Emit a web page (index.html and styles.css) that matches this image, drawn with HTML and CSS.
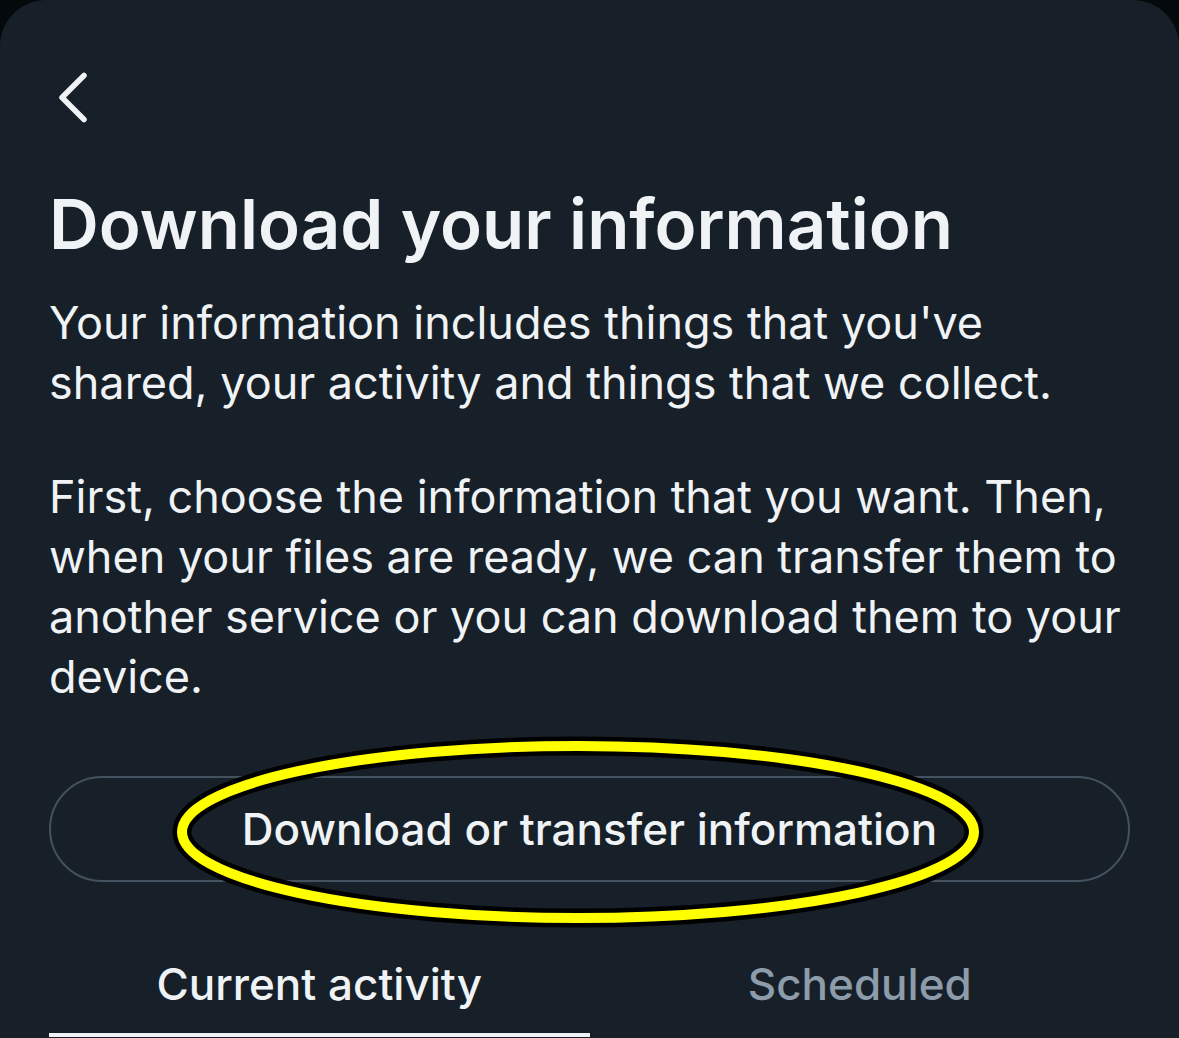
FILE: index.html
```html
<!DOCTYPE html>
<html lang="en">
<head>
  <meta charset="UTF-8" />
  <meta name="viewport" content="width=device-width, initial-scale=1.0"/>
  <title>Download your information</title>
  <link rel="stylesheet" href="styles.css">
</head>
<body>
  <div class="sheet">
    <button class="back-btn" aria-label="Back">
      <svg width="40" height="54" viewBox="0 0 40 54">
        <path d="M30 4.5 L8 26.5 L30 48.5" fill="none" stroke="#f0f3f6" stroke-width="5.5" stroke-linecap="round" stroke-linejoin="round"/>
      </svg>
    </button>

    <h1 class="title">Download your information</h1>
    <p class="text">Your information includes things that you've shared, your activity and things that we collect.</p>
    <p class="text">First, choose the information that you want. Then, when your files are ready, we can transfer them to another service or you can download them to your device.</p>

    <div class="action">
      <button class="outline-btn">Download or transfer information</button>
      <svg class="highlight" width="820" height="196" viewBox="0 0 820 196">
        <ellipse cx="410" cy="98" rx="396" ry="86" fill="none" stroke="#000" stroke-width="19"/>
        <ellipse cx="410" cy="98" rx="396" ry="86" fill="none" stroke="#ffff00" stroke-width="10"/>
      </svg>
    </div>

    <div class="tabs">
      <div class="tab active">Current activity</div>
      <div class="tab">Scheduled</div>
    </div>
  </div>
</body>
</html>
```

FILE: styles.css
```css
* {
  box-sizing: border-box;
}

body {
  margin: 0;
  background: #04090c;
  font-family: Inter, "Noto Sans", sans-serif;
  color: #f0f3f6;
  height: 1038px;
  overflow: hidden;
}

.sheet {
  background: #172028;
  border-radius: 46px 46px 0 0;
  height: 1038px;
  padding: 0 49px;
  display: flex;
  flex-direction: column;
}

.back-btn {
  background: none;
  border: none;
  padding: 0;
  margin: 71px 0 0 5px;
  width: 40px;
  height: 54px;
  cursor: pointer;
  align-self: flex-start;
}

.back-btn svg {
  display: block;
}

.title {
  font-size: 69px;
  font-weight: 600;
  margin: 57px 0 0;
  line-height: 84px;
}

.text {
  font-size: 45px;
  line-height: 60px;
  margin: 27px 0 0;
}

.text + .text {
  margin-top: 54px;
}

.action {
  position: relative;
  margin-top: 69px;
}

.outline-btn {
  display: block;
  width: 100%;
  height: 106px;
  border: 2px solid #44515e;
  border-radius: 53px;
  background: transparent;
  color: #f0f3f6;
  font-family: inherit;
  font-size: 44px;
  font-weight: 500;
}

.highlight {
  position: absolute;
  left: 119px;
  top: -42px;
  pointer-events: none;
}

.tabs {
  display: flex;
  margin-top: 72px;
}

.tab {
  flex: 1;
  text-align: center;
  font-size: 44px;
  font-weight: 500;
  line-height: 60px;
  color: #8c9caa;
  padding-bottom: 19px;
  border-bottom: 4px solid transparent;
}

.tab.active {
  color: #f0f3f6;
  border-bottom-color: #eef2f5;
}
```
